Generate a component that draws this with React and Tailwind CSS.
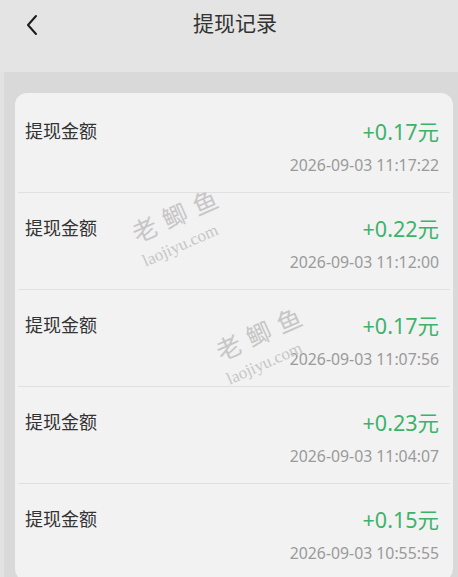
import React from 'react';

const records = [
    { amount: '+0.17元', time: '2026-09-03 11:17:22' },
    { amount: '+0.22元', time: '2026-09-03 11:12:00' },
    { amount: '+0.17元', time: '2026-09-03 11:07:56' },
    { amount: '+0.23元', time: '2026-09-03 11:04:07' },
    { amount: '+0.15元', time: '2026-09-03 10:55:55' },
];

const font = { fontFamily: '"Noto Sans", "Noto Sans CJK SC", sans-serif' };

function Watermark({ className }) {
    return (
        <div className={`pointer-events-none absolute w-[110px] -rotate-[24deg] text-[#c6c6c6] ${className}`}>
            <div className="text-[25px] tracking-[8px] leading-none ml-[6px]" style={{ fontFamily: '"Noto Sans CJK SC", sans-serif' }}>老鲫鱼</div>
            <div className="text-[17px] leading-none mt-[9px] ml-[4px] whitespace-nowrap" style={{ fontFamily: '"Liberation Serif", serif' }}>laojiyu.com</div>
        </div>
    );
}

export default function App() {
    return (
        <div className="w-[458px] h-[577px] overflow-hidden bg-[#d9d9d9] relative" style={font}>
            {/* Header */}
            <div className="h-[72px] bg-[#e4e4e4] relative">
                <svg className="absolute left-[24px] top-[13px]" width="16" height="24" viewBox="0 0 16 24" fill="none">
                    <path d="M12 3 L4 12 L12 21" stroke="#1a1a1a" strokeWidth="2" strokeLinecap="round" strokeLinejoin="round" />
                </svg>
                <div className="pl-[12px] text-center text-[21px] text-[#333] pt-[8px] leading-[30px]">提现记录</div>
            </div>

            {/* List */}
            <div className="pl-[11px] pr-[5px] pt-[21px] border-l-[4px] border-[#e2e2e2] h-full">
                <div className="bg-[#f2f2f2] rounded-[12px]">
                    {records.map((r, i) => (
                        <div
                            key={i}
                            className={`flex justify-between mx-[3px] pl-[7px] pr-[11px] ${i === 0 ? 'pt-[25px] h-[100px]' : 'pt-[22px] h-[97px]'} ${i < records.length - 1 ? 'border-b border-[#e0e0e0]' : ''}`}
                        >
                            <div className="text-[18px] text-[#333] leading-[26px]">提现金额</div>
                            <div className="flex flex-col items-end">
                                <div className="text-[21.5px] text-[#3db36a] leading-[28px]">{r.amount}</div>
                                <div className="text-[15.8px] text-[#9a9a9a] leading-[20px] mt-[9px]">{r.time}</div>
                            </div>
                        </div>
                    ))}
                </div>
            </div>

            <Watermark className="left-[128px] top-[200px]" />
            <Watermark className="left-[212px] top-[318px]" />
        </div>
    );
}
